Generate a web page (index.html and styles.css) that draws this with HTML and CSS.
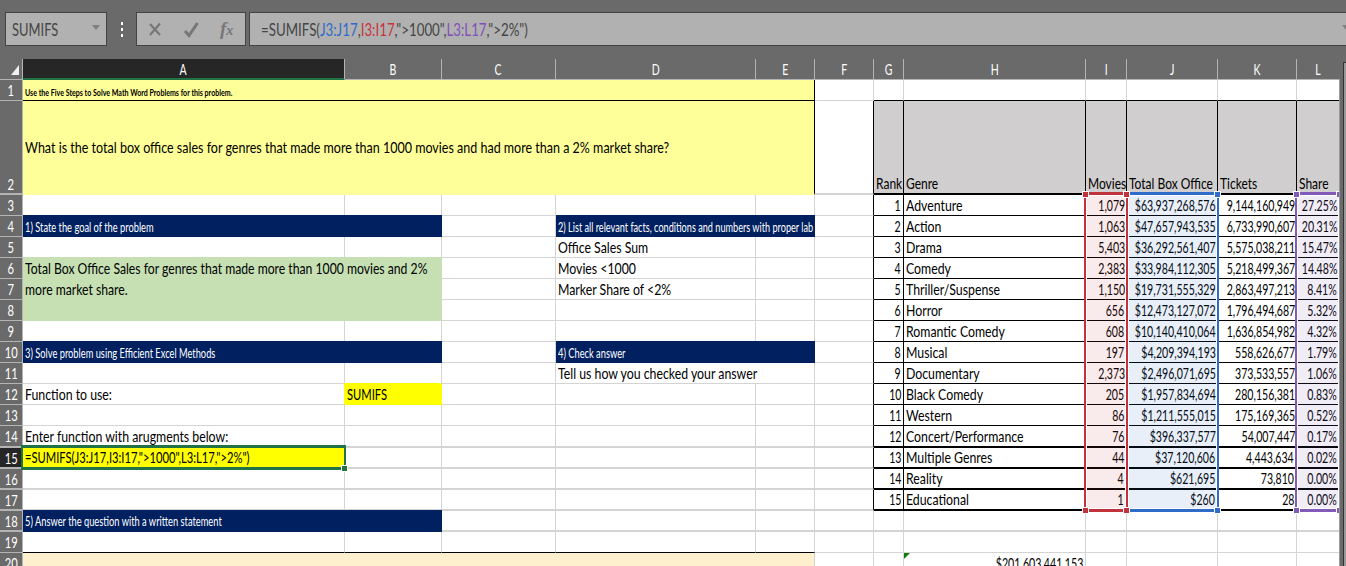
FILE: index.html
```html
<!DOCTYPE html>
<html lang="en">
<head>
    <meta charset="UTF-8">
    <meta name="viewport" content="width=device-width, initial-scale=1.0">
    <title>Box Office Worksheet</title>
    <link rel="stylesheet" href="styles.css">
</head>
<body>
    <div class="formula-bar">
        <div class="box name-box"><span class="f">SUMIFS</span><i class="arrow"></i></div>
        <div class="dots"><i></i><i></i><i></i></div>
        <div class="box buttons">
            <svg width="108" height="32" viewBox="0 0 108 32">
                <path d="M13 11l10 11M23 10.500L13 22" stroke="#777" stroke-width="2.200" fill="none"/>
                <path d="M48 18l4 4.500L60.500 10" stroke="#777" stroke-width="3" fill="none"/>
            </svg>
            <span class="fx">f<small>x</small></span>
        </div>
        <div class="box formula"><span class="f">=SUMIFS(<b class="blue">J3:J17</b>,<b class="red">I3:I17</b>,"&gt;1000",<b class="purple">L3:L17</b>,"&gt;2%")</span><i class="arrow"></i></div>
    </div>

    <div class="sheet">
        <table>
            <colgroup>
                <col class="c-num"><col class="c-a"><col class="c-b"><col class="c-c"><col class="c-d"><col class="c-e"><col class="c-f"><col class="c-g"><col class="c-h"><col class="c-i"><col class="c-j"><col class="c-k"><col class="c-l">
            </colgroup>
            <tr class="letters">
                <th class="corner"><i></i></th><th class="active"><span>A</span></th><th><span>B</span></th><th><span>C</span></th><th><span>D</span></th><th><span>E</span></th><th><span>F</span></th><th><span>G</span></th><th><span>H</span></th><th><span>I</span></th><th><span>J</span></th><th><span>K</span></th><th><span>L</span></th>
            </tr>
            <tr>
                <th><span>1</span></th><td colspan="5" class="yellow intro"><span>Use the Five Steps to Solve Math Word Problems for this problem.</span></td><td></td><td class="under"></td><td class="under"></td><td class="under"></td><td class="under"></td><td class="under"></td><td class="under"></td>
            </tr>
            <tr class="row2 thick">
                <th><span>2</span></th><td colspan="5" class="yellow question"><span>What is the total box office sales for genres that made more than 1000 movies and had more than a 2% market share?</span></td><td class="edge"></td><td class="head"><span>Rank</span></td><td class="head"><span>Genre</span></td><td class="head"><span>Movies</span></td><td class="head"><span>Total Box Office</span></td><td class="head"><span>Tickets</span></td><td class="head"><span>Share</span></td>
            </tr>
            <tr>
                <th><span>3</span></th><td></td><td></td><td></td><td></td><td></td><td class="edge"></td><td class="n"><span>1</span></td><td class="k"><span>Adventure</span></td><td class="n"><span>1,079</span></td><td class="n"><span>$63,937,268,576</span></td><td class="n"><span>9,144,160,949</span></td><td class="n"><span>27.25%</span></td>
            </tr>
            <tr>
                <th><span>4</span></th><td colspan="2" class="navy"><span>1) State the goal of the problem</span></td><td></td><td colspan="2" class="navy"><span class="facts">2) List all relevant facts, conditions and numbers with proper lab</span></td><td class="edge"></td><td class="n"><span>2</span></td><td class="k"><span>Action</span></td><td class="n"><span>1,063</span></td><td class="n"><span>$47,657,943,535</span></td><td class="n"><span>6,733,990,607</span></td><td class="n"><span>20.31%</span></td>
            </tr>
            <tr>
                <th><span>5</span></th><td></td><td></td><td></td><td><span>Office Sales Sum</span></td><td></td><td class="edge"></td><td class="n"><span>3</span></td><td class="k"><span>Drama</span></td><td class="n"><span>5,403</span></td><td class="n"><span>$36,292,561,407</span></td><td class="n"><span>5,575,038,211</span></td><td class="n"><span>15.47%</span></td>
            </tr>
            <tr>
                <th><span>6</span></th><td colspan="2" rowspan="3" class="green"><span>Total Box Office Sales for genres that made more than 1000 movies and 2%<br>more market share.</span></td><td></td><td><span>Movies &lt;1000</span></td><td></td><td class="edge"></td><td class="n"><span>4</span></td><td class="k"><span>Comedy</span></td><td class="n"><span>2,383</span></td><td class="n"><span>$33,984,112,305</span></td><td class="n"><span>5,218,499,367</span></td><td class="n"><span>14.48%</span></td>
            </tr>
            <tr>
                <th><span>7</span></th><td></td><td><span>Marker Share of &lt;2%</span></td><td></td><td class="edge"></td><td class="n"><span>5</span></td><td class="k"><span>Thriller/Suspense</span></td><td class="n"><span>1,150</span></td><td class="n"><span>$19,731,555,329</span></td><td class="n"><span>2,863,497,213</span></td><td class="n"><span>8.41%</span></td>
            </tr>
            <tr>
                <th><span>8</span></th><td></td><td></td><td></td><td class="edge"></td><td class="n"><span>6</span></td><td class="k"><span>Horror</span></td><td class="n"><span>656</span></td><td class="n"><span>$12,473,127,072</span></td><td class="n"><span>1,796,494,687</span></td><td class="n"><span>5.32%</span></td>
            </tr>
            <tr>
                <th><span>9</span></th><td></td><td></td><td></td><td></td><td></td><td class="edge"></td><td class="n"><span>7</span></td><td class="k"><span>Romantic Comedy</span></td><td class="n"><span>608</span></td><td class="n"><span>$10,140,410,064</span></td><td class="n"><span>1,636,854,982</span></td><td class="n"><span>4.32%</span></td>
            </tr>
            <tr>
                <th><span>10</span></th><td colspan="2" class="navy"><span>3) Solve problem using Efficient Excel Methods</span></td><td></td><td colspan="2" class="navy"><span>4) Check answer</span></td><td class="edge"></td><td class="n"><span>8</span></td><td class="k"><span>Musical</span></td><td class="n"><span>197</span></td><td class="n"><span>$4,209,394,193</span></td><td class="n"><span>558,626,677</span></td><td class="n"><span>1.79%</span></td>
            </tr>
            <tr>
                <th><span>11</span></th><td></td><td></td><td></td><td colspan="2"><span>Tell us how you checked your answer</span></td><td class="edge"></td><td class="n"><span>9</span></td><td class="k"><span>Documentary</span></td><td class="n"><span>2,373</span></td><td class="n"><span>$2,496,071,695</span></td><td class="n"><span>373,533,557</span></td><td class="n"><span>1.06%</span></td>
            </tr>
            <tr>
                <th><span>12</span></th><td><span>Function to use:</span></td><td class="bright"><span class="fn">SUMIFS</span></td><td></td><td></td><td></td><td class="edge"></td><td class="n"><span>10</span></td><td class="k"><span>Black Comedy</span></td><td class="n"><span>205</span></td><td class="n"><span>$1,957,834,694</span></td><td class="n"><span>280,156,381</span></td><td class="n"><span>0.83%</span></td>
            </tr>
            <tr>
                <th><span>13</span></th><td></td><td></td><td></td><td></td><td></td><td class="edge"></td><td class="n"><span>11</span></td><td class="k"><span>Western</span></td><td class="n"><span>86</span></td><td class="n"><span>$1,211,555,015</span></td><td class="n"><span>175,169,365</span></td><td class="n"><span>0.52%</span></td>
            </tr>
            <tr class="thick tall">
                <th><span>14</span></th><td><span>Enter function with arugments below:</span></td><td></td><td></td><td></td><td></td><td class="edge"></td><td class="n"><span>12</span></td><td class="k"><span>Concert/Performance</span></td><td class="n"><span>76</span></td><td class="n"><span>$396,337,577</span></td><td class="n"><span>54,007,447</span></td><td class="n"><span>0.17%</span></td>
            </tr>
            <tr class="thick">
                <th class="active"><span>15</span></th><td class="bright"><span class="fn">=SUMIFS(J3:J17,I3:I17,"&gt;1000",L3:L17,"&gt;2%")</span></td><td></td><td></td><td></td><td></td><td class="edge"></td><td class="n"><span>13</span></td><td class="k"><span>Multiple Genres</span></td><td class="n"><span>44</span></td><td class="n"><span>$37,120,606</span></td><td class="n"><span>4,443,634</span></td><td class="n"><span>0.02%</span></td>
            </tr>
            <tr class="thick">
                <th><span>16</span></th><td></td><td></td><td></td><td></td><td></td><td class="edge"></td><td class="n"><span>14</span></td><td class="k"><span>Reality</span></td><td class="n"><span>4</span></td><td class="n"><span>$621,695</span></td><td class="n"><span>73,810</span></td><td class="n"><span>0.00%</span></td>
            </tr>
            <tr class="thick">
                <th><span>17</span></th><td></td><td></td><td></td><td></td><td></td><td class="edge"></td><td class="n"><span>15</span></td><td class="k"><span>Educational</span></td><td class="n"><span>1</span></td><td class="n"><span>$260</span></td><td class="n"><span>28</span></td><td class="n"><span>0.00%</span></td>
            </tr>
            <tr class="thick">
                <th><span>18</span></th><td colspan="2" class="navy"><span>5) Answer the question with a written statement</span></td><td></td><td></td><td></td><td></td><td></td><td></td><td></td><td></td><td></td><td></td>
            </tr>
            <tr>
                <th><span>19</span></th><td class="under"></td><td class="under"></td><td class="under"></td><td class="under"></td><td class="under"></td><td></td><td></td><td></td><td></td><td></td><td></td><td></td>
            </tr>
            <tr>
                <th><span>20</span></th><td colspan="5" class="cream"></td><td></td><td></td><td class="sum"><i></i><span>$201,603,441,153</span></td><td></td><td></td><td></td><td></td>
            </tr>
        </table>

        <!-- ranges used by the formula -->
        <div class="range range-i"><i></i><i></i><i></i><i></i></div>
        <div class="range range-j"><i></i><i></i><i></i><i></i></div>
        <div class="range range-l"><i></i><i></i><i></i><i></i></div>
        <!-- active cell -->
        <div class="cursor"><i></i></div>
        <div class="scroll"><i></i></div>
    </div>
</body>
</html>
```
FILE: styles.css
```css
* {
    box-sizing: border-box;
}
body {
    margin: 0;
    width: 1346px;
    height: 566px;
    overflow: hidden;
    background: #6a6a6a;
    font-family: Lato, "Open Sans", sans-serif;
    font-size: 15px;
    color: #000;
}

/* formula bar */
.formula-bar {
    display: flex;
    height: 59px;
    padding: 12px 0 0 5px;
}
.box {
    display: flex;
    align-items: center;
    height: 34px;
    background: #b1b1b1;
    border: 1px solid #444;
    color: #444;
    white-space: nowrap;
}
.name-box {
    width: 102px;
    padding: 0 6px;
    justify-content: space-between;
}
.arrow {
    border: 4px solid transparent;
    border-top: 5px solid #808080;
    border-bottom: 0;
    margin-bottom: 4px;
}
.f {
    font-size: 17px;
    transform: scaleX(.76);
    transform-origin: left;
}
.formula .f {
    transform: scaleX(.783);
}
.f b {
    font-weight: normal;
}
.blue {
    color: #2f6bcb;
}
.red {
    color: #c8323c;
}
.purple {
    color: #8250b9;
}
.dots {
    display: flex;
    flex-direction: column;
    gap: 3px;
    width: 29px;
    padding: 10px 0 0 14px;
}
.dots i {
    width: 2px;
    height: 3px;
    background: #fff;
}
.buttons {
    width: 110px;
    margin-right: 3px;
}
.fx {
    margin-left: -25px;
    font: italic bold 19px "Liberation Serif", serif;
    color: #777;
}
.fx small {
    font-size: 14px;
}
.formula {
    flex: 1;
    padding-left: 11px;
    justify-content: space-between;
    border-right: 0;
}
.formula .arrow {
    margin-right: -4px;
}

/* worksheet */
.sheet {
    position: relative;
    width: 1346px;
    height: 507px;
    overflow: hidden;
}
table {
    table-layout: fixed;
    width: 1339px;
    border-spacing: 0;
    background: #fff;
}
.c-num { width: 23px; }
.c-a { width: 322px; }
.c-b { width: 97px; }
.c-c { width: 114px; }
.c-d { width: 200px; }
.c-e { width: 59px; }
.c-f { width: 59px; }
.c-g { width: 30px; }
.c-h { width: 182px; }
.c-i { width: 41px; }
.c-j { width: 91px; }
.c-k { width: 79px; }
.c-l { width: 42px; }
tr {
    height: 21px;
}
th, td {
    padding: 0 2px;
    border-right: 1px solid #d4d4d4;
    border-bottom: 1px solid #d4d4d4;
    line-height: 20px;
    white-space: nowrap;
    text-align: left;
    vertical-align: bottom;
}
td {
    overflow: hidden;
}
td:last-child {
    border-right: 0;
}
td span {
    display: inline-block;
    transform: scaleX(.82);
    transform-origin: left;
    vertical-align: top;
}
th {
    padding: 0;
    background: #6a6a6a;
    border-color: #b4b4b4;
    color: #fff;
    font-weight: normal;
    font-size: 16px;
    text-align: center;
}
th span {
    display: inline-block;
    transform: scaleX(.7);
    vertical-align: top;
}
.letters th {
    font-size: 15px;
}
.letters th:last-child {
    border-right: 0;
}
th.active {
    background: #262626;
}
.letters .active {
    box-shadow: inset 0 -1px #217346;
    border-bottom-color: #217346;
}
.corner i {
    display: block;
    width: 8px;
    height: 10px;
    margin: 0 0 4px 11px;
    background: #f0f0f0;
    clip-path: polygon(100% 0, 100% 100%, 0 100%);
}
.thick th, .thick td {
    border-bottom-width: 2px;
    line-height: 19px;
}
.tall {
    height: 22px;
}
.tall th, .tall td {
    line-height: 20px;
}
.row2 {
    height: 94px;
}
td.under {
    border-bottom-color: #000;
}
td.edge {
    border-right-color: #000;
}
.yellow {
    background: #ff9;
    border-right-color: #000;
    border-bottom-color: #000;
}
.intro span {
    font-size: 9px;
    font-weight: bold;
    line-height: 14px;
    padding-top: 6px;
    transform: scaleX(.785);
}
td.question {
    vertical-align: middle;
    border-bottom-color: #ff9;
}
.question span {
    transform: scaleX(.834);
}
.head {
    background: #d0cece;
    border-color: #000;
}
.head span {
    transform: scaleX(.8);
}
.n, .k {
    border-color: #000;
}
.n {
    text-align: right;
    direction: rtl;
}
.n span {
    direction: ltr;
    transform: scaleX(.705);
    transform-origin: right;
}
.navy {
    background: #002060;
    border-color: #002060;
    box-shadow: 0 -1px #002060;
    color: #fff;
}
.navy span {
    font-size: 13px;
    line-height: 20px;
    padding-top: 1px;
    margin-bottom: -1px;
    transform: scaleX(.715);
}
.navy .facts {
    transform: scaleX(.703);
}
.thick .navy span {
    line-height: 19px;
}
.green {
    background: #c6e0b4;
    border-color: #c6e0b4;
    box-shadow: 0 -1px #c6e0b4;
    vertical-align: top;
    line-height: 21px;
}
.green span {
    transform: scaleX(.813);
}
.bright {
    background: #ff0;
    border-color: #ff0;
    box-shadow: -1px -1px #ff0;
}
.bright .fn {
    transform: scaleX(.747);
}
.cream {
    background: #fff0cd;
}
.sum {
    position: relative;
    text-align: right;
    direction: rtl;
}
.sum span {
    direction: ltr;
    transform: scaleX(.71);
    transform-origin: right;
}
.sum i {
    position: absolute;
    left: 0;
    top: 0;
    border: 3px solid #107c10;
    border-right-color: transparent;
    border-bottom-color: transparent;
}

/* coloured range outlines */
.range {
    position: absolute;
    top: 133px;
    height: 320px;
    border: 2px solid;
    border-top-width: 3px;
    border-bottom-width: 3px;
    box-shadow: inset 0 0 0 1px #fff;
}
.range i, .cursor i {
    position: absolute;
    width: 5px;
    height: 5px;
    background: currentColor;
    box-shadow: 0 0 0 1px #fff;
}
.range i:nth-child(1) { left: -3px; top: -3px; }
.range i:nth-child(2) { right: -3px; top: -3px; }
.range i:nth-child(3) { left: -3px; bottom: -4px; }
.range i:nth-child(4) { right: -3px; bottom: -4px; }
.range-i {
    left: 1084px;
    width: 44px;
    color: #c0323c;
    background: rgba(192, 50, 60, .1);
    z-index: 1;
}
.range-j {
    left: 1128px;
    width: 91px;
    color: #2f6bc8;
    border-left: 0;
    background: rgba(47, 107, 200, .11);
}
.range-j i:nth-child(odd) {
    display: none;
}
.range-l {
    left: 1295px;
    width: 46px;
    color: #825ab9;
    background: rgba(130, 90, 185, .11);
}
.cursor {
    position: absolute;
    left: 21px;
    top: 386px;
    width: 325px;
    height: 25px;
    border: 2px solid #217346;
    border-top-width: 3px;
    border-bottom-width: 3px;
    color: #217346;
}
.cursor i {
    right: -3px;
    bottom: -4px;
}
.scroll {
    position: absolute;
    left: 1339px;
    top: 20px;
    width: 7px;
    height: 487px;
    background: #6a6a6a;
    border-left: 1px solid #999;
    z-index: 2;
}
.scroll i {
    position: absolute;
    left: 3px;
    top: -17px;
    width: 4px;
    height: 510px;
    background: #999;
    border-left: 1px solid #333;
    border-top: 1px solid #333;
}
```
